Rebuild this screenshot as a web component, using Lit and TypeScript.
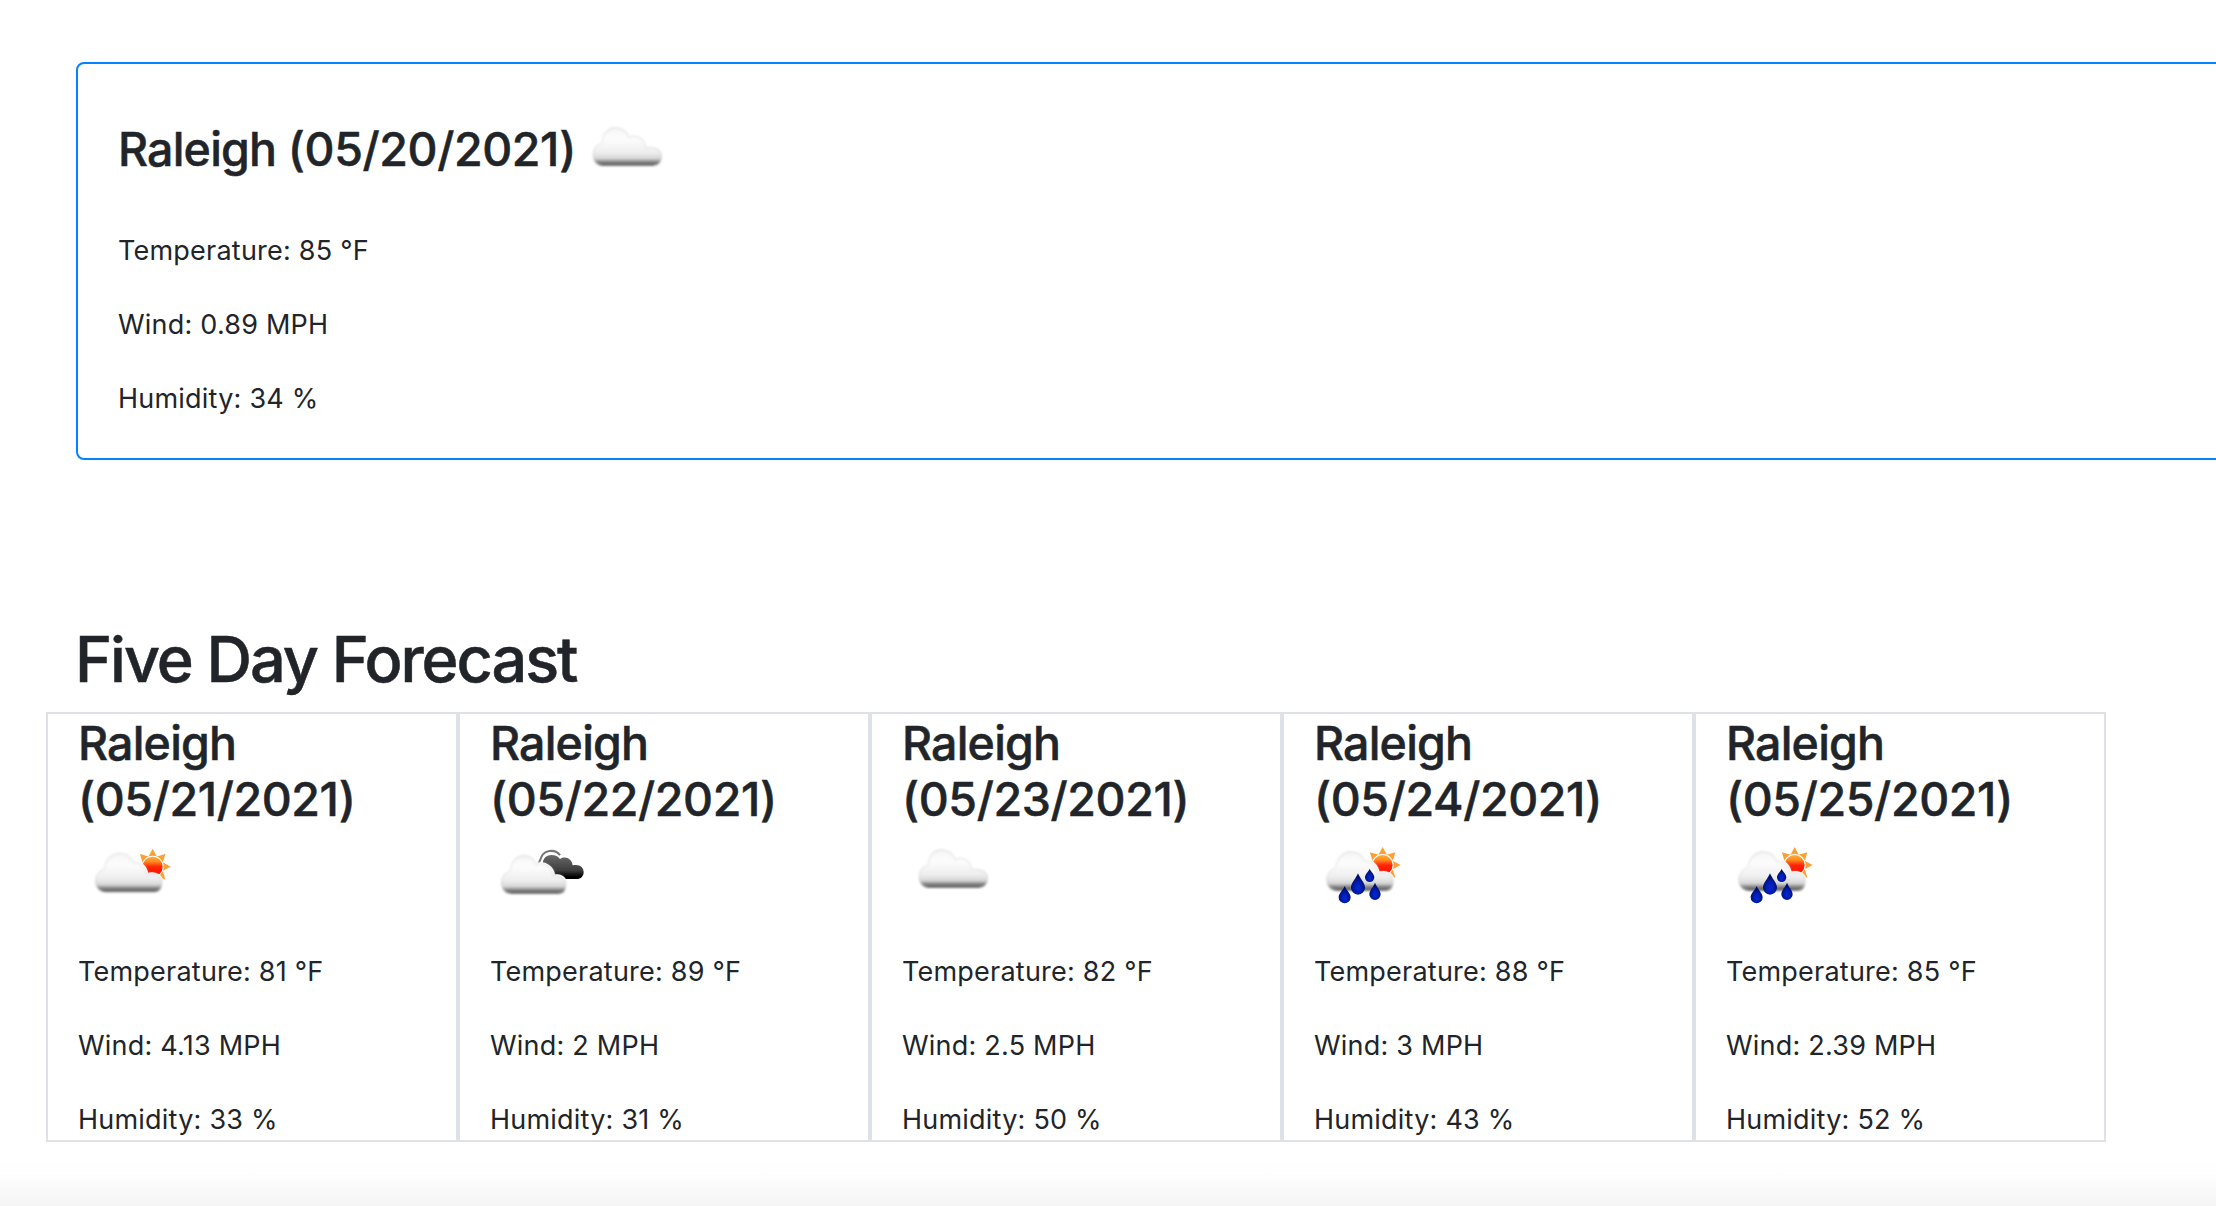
import { LitElement, html, svg, css } from "lit";
import { customElement, property } from "lit/decorators.js";

type Kind = "clouds" | "few" | "broken" | "rain";
interface Day { date: string; kind: Kind; temp: string; wind: string; humidity: string; }

const today: Day = { date: "05/20/2021", kind: "clouds", temp: "85", wind: "0.89", humidity: "34" };
const days: Day[] = [
  { date: "05/21/2021", kind: "few", temp: "81", wind: "4.13", humidity: "33" },
  { date: "05/22/2021", kind: "broken", temp: "89", wind: "2", humidity: "31" },
  { date: "05/23/2021", kind: "clouds", temp: "82", wind: "2.5", humidity: "50" },
  { date: "05/24/2021", kind: "rain", temp: "88", wind: "3", humidity: "43" },
  { date: "05/25/2021", kind: "rain", temp: "85", wind: "2.39", humidity: "52" },
];

const CLOUD =
  "M88 172C68 171 58 157 58 141C58 122 69 109 85 104C85 78 101 60 125 60C145 60 158 72 166 89C182 80 211 86 216 120C245 113 262 128 262 145C262 161 252 172 236 172Z";
const SUN_CLOUD =
  "M78 185C58 184 47 170 47 154C47 136 58 122 74 117C75 90 95 70 120 70C141 70 154 82 161 99C178 94 197 108 201 134C228 126 245 140 245 157C245 174 236 185 220 185Z";
const BROKEN_CLOUD =
  "M88 172C68 171 58 157 58 141C58 122 69 109 85 104C85 78 101 60 125 60C145 60 156 70 162 86C187 76 212 94 215 120C236 115 250 128 250 145C250 161 244 172 228 172Z";

const cloud = (d: string) => svg`
  <g filter="url(#soft)">
    <path d=${d} fill="url(#cloud)"/>
    <path d=${d} fill="none" stroke="url(#edge)" stroke-width="4"/>
  </g>`;
const ray = (a: number) => svg`<path d="M-13 -30L0 -54L13 -30Z" transform="rotate(${a})" fill="#f9a136"/>`;
const sun = svg`
  <g transform="translate(218 110)">
    ${[-45, 0, 45, 90, 135].map(ray)}
    <circle r="33" fill="#fff"/>
    <circle r="30" fill="url(#sun)"/>
  </g>`;
const drop = (x: number, top: number, bottom: number, r: number) => svg`
  <path d="M${x} ${top}C${x + r * 0.25} ${top + r * 0.7} ${x + r} ${bottom - r * 1.7} ${x + r} ${bottom - r}A${r} ${r} 0 0 1 ${x - r} ${bottom - r}C${x - r} ${bottom - r * 1.7} ${x - r * 0.25} ${top + r * 0.7} ${x} ${top}Z" fill="url(#drop)"/>`;

const art = {
  clouds: svg`<g transform="translate(-2 12) scale(.3333)">${cloud(CLOUD)}</g>`,
  few: svg`<g transform="translate(2 12) scale(.3333)">
    <g filter="url(#blur)">${sun}</g>
    <path d=${SUN_CLOUD} fill="none" stroke="#fff" stroke-width="9"/>
    ${cloud(SUN_CLOUD)}</g>`,
  broken: svg`<g transform="translate(-10 12) scale(.3333)">
    <g filter="url(#blur)">
      <path d="M172 104C184 98 178 66 208 63C225 61 235 68 240 76" fill="none" stroke="#777" stroke-width="6"/>
      <path d="M188 104C188 86 198 75 214 75C227 75 234 79 240 87C258 76 276 88 278 106C299 101 311 112 311 126C311 139 302 147 290 147H220Z" fill="url(#dark)"/>
    </g>
    <g transform="translate(7 18)">
      <path d=${BROKEN_CLOUD} fill="none" stroke="#fff" stroke-width="8"/>
      ${cloud(BROKEN_CLOUD)}
    </g></g>`,
  rain: svg`<g transform="translate(-4 12) scale(.3333)">
    <g transform="translate(0 -5)" filter="url(#blur)">${sun}</g>
    <g transform="translate(4 -4)">
      <path d=${SUN_CLOUD} fill="none" stroke="#fff" stroke-width="9"/>
      ${cloud(SUN_CLOUD)}
    </g>
    <g filter="url(#blur)">
      ${drop(104, 168, 220, 18)}${drop(144, 130, 194, 21)}${drop(179, 116, 156, 14)}${drop(195, 158, 210, 17)}
    </g></g>`,
};

@customElement("weather-icon")
class WeatherIcon extends LitElement {
  @property() kind: Kind = "clouds";
  static styles = css`
    :host { display: block; width: 100px; height: 100px; }
    svg { display: block; }
  `;
  render() {
    return html`<svg width="100" height="100" viewBox="0 0 100 100">
      <defs>
        <linearGradient id="cloud" x1="0" x2="0" y1="0" y2="1">
          <stop offset="0" stop-color="#f6f6f6"/><stop offset=".3" stop-color="#fcfcfc"/>
          <stop offset=".65" stop-color="#efefef"/><stop offset=".82" stop-color="#d6d6d6"/>
          <stop offset=".9" stop-color="#8a8a8a"/><stop offset="1" stop-color="#555"/>
        </linearGradient>
        <linearGradient id="edge" x1="0" x2="0" y1="0" y2="1">
          <stop offset="0" stop-color="#e2e2e2"/><stop offset=".4" stop-color="#ebebeb"/>
          <stop offset=".8" stop-color="#d6d6d6"/><stop offset="1" stop-color="#777"/>
        </linearGradient>
        <linearGradient id="dark" x1="0" x2="0" y1="0" y2="1">
          <stop offset="0" stop-color="#6a6a6a"/><stop offset=".65" stop-color="#3c3c3c"/><stop offset=".9" stop-color="#000"/>
        </linearGradient>
        <linearGradient id="sun" x1="0" x2="0" y1="0" y2="1">
          <stop offset="0" stop-color="#fbb03b"/><stop offset=".25" stop-color="#fd8a20"/>
          <stop offset=".5" stop-color="#ff2a05"/><stop offset="1" stop-color="#f00"/>
        </linearGradient>
        <radialGradient id="drop" cx=".5" cy=".68" r=".55">
          <stop offset="0" stop-color="#0628d8"/><stop offset=".5" stop-color="#041cae"/><stop offset="1" stop-color="#020b60"/>
        </radialGradient>
        <filter id="soft" x="-15%" y="-15%" width="130%" height="130%"><feGaussianBlur stdDeviation="3"/></filter>
        <filter id="blur" x="-15%" y="-15%" width="130%" height="130%"><feGaussianBlur stdDeviation="2"/></filter>
      </defs>
      ${art[this.kind]}
    </svg>`;
  }
}

@customElement("app-root")
class AppRoot extends LitElement {
  static styles = css`
    :host {
      display: block; box-sizing: border-box; height: 1206px; overflow: hidden;
      padding-top: 62px; color: #212529;
      background: linear-gradient(to bottom, #fff 1162px, #fdfdfd 1178px, #f5f5f5 1206px);
      font-family: Inter, "Liberation Sans", sans-serif; font-size: 27px; line-height: 42px;
    }
    h2, h3, p { margin: 0; }
    h2, h3 { font-weight: 500; white-space: nowrap; -webkit-text-stroke: 0.5px #212529; }
    .current {
      box-sizing: border-box; height: 398px; margin-left: 76px; margin-right: -40px;
      border: 2px solid #0583ff; border-radius: 8px; padding: 32px 40px;
    }
    .current header { display: flex; align-items: center; height: 100px; }
    h3 { font-size: 46.5px; line-height: 56px; letter-spacing: -0.8px; }
    .current h3 { box-sizing: border-box; width: 458px; padding-top: 6px; }
    .stats { display: grid; gap: 32px; margin-top: 33px; letter-spacing: 0.22px; white-space: nowrap; }
    .current .stats { margin-top: 34px; }
    h2 { font-size: 63px; line-height: 76px; letter-spacing: -2.05px; margin: 161px 0 15px 75px; }
    .forecast { display: grid; grid-template-columns: repeat(5, 412px); margin-left: 46px; }
    .day {
      box-sizing: border-box; height: 430px; border: 2px solid #dee2e6; padding: 1px 30px 0;
    }
    .date { letter-spacing: -0.4px; }
    .day weather-icon { margin-top: -9px; }
  `;

  private stats(d: Day) {
    return html`<div class="stats">
      <p>Temperature: ${d.temp} °F</p>
      <p>Wind: ${d.wind} MPH</p>
      <p>Humidity: ${d.humidity} %</p>
    </div>`;
  }

  render() {
    return html`
      <section class="current">
        <header>
          <h3>Raleigh <span class="date">(${today.date})</span></h3>
          <weather-icon .kind=${today.kind}></weather-icon>
        </header>
        ${this.stats(today)}
      </section>
      <h2>Five Day Forecast</h2>
      <section class="forecast">
        ${days.map((d) => html`<article class="day">
          <h3>Raleigh<br /><span class="date">(${d.date})</span></h3>
          <weather-icon .kind=${d.kind}></weather-icon>
          ${this.stats(d)}
        </article>`)}
      </section>`;
  }
}
